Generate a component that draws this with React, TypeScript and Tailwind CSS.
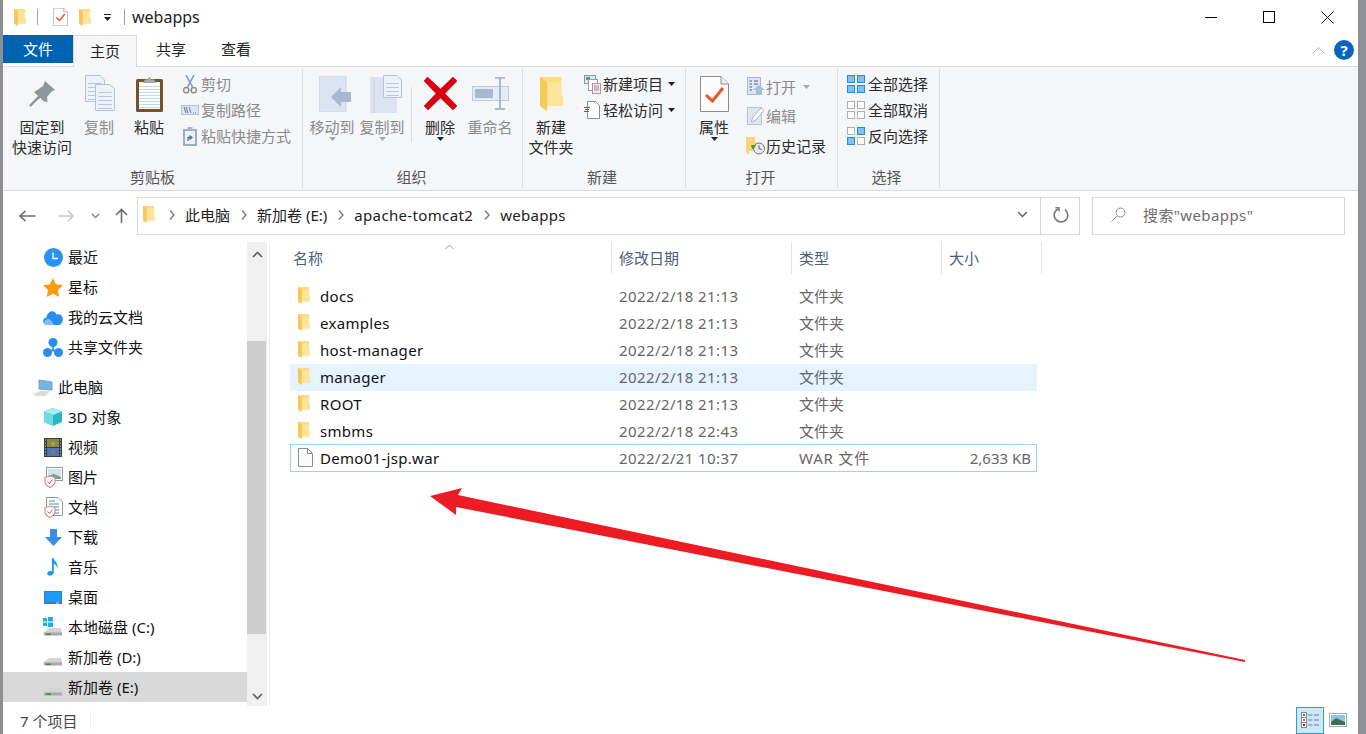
import React from "react";

const Folder = ({ w = 12, h = 17 }: { w?: number; h?: number }) => (
  <svg width={w} height={h} viewBox="0 0 68 100" preserveAspectRatio="none" className="block shrink-0">
    <path d="M0 0H63V55H68V85H21V100L0 85Z" fill="#fbdb84" />
    <path d="M21 15H63V55H68V85H21Z" fill="#fde49b" />
    <path d="M0 0L21 15V100L0 85Z" fill="#f5c85a" />
  </svg>
);

const CheckDoc = ({ w = 15, h = 18 }: { w?: number; h?: number }) => (
  <svg width={w} height={h} viewBox="0 0 29 36" className="block shrink-0">
    <path d="M.5.5H21L28.5 8V35.5H.5Z" fill="#fdfdfd" stroke="#8c8c8c" />
    <path d="M21 .5V8H28.5" fill="#eee" stroke="#8c8c8c" />
    <path d="M6 19L12.5 25L23 12" fill="none" stroke="#e8562a" strokeWidth="3" />
  </svg>
);

const Pin = () => (
  <svg width="27" height="26" viewBox="0 0 27 26" className="block">
    <path d="M0 25L9 15L11 17Z" fill="#8d979c" />
    <path d="M16 0L26 9L22.5 10.5L18 16L18.5 21L15 20.5L5 11L9 8.5L14 5Z" fill="#8d979c" />
    <path d="M1 25L11 15" stroke="#8d979c" strokeWidth="2.4" />
  </svg>
);

const DocSheet = ({ x, y, w, h }: { x: number; y: number; w: number; h: number }) => (
  <g>
    <path d={`M${x + .5} ${y + .5}H${x + w - 5}L${x + w - .5} ${y + 5}V${y + h - .5}H${x + .5}Z`} fill="#eef3fa" stroke="#b4c2dc" />
    {[8, 12, 16, 20, 24, 28].filter((l) => l < h - 2).map((l) => (
      <path key={l} d={`M${x + 3} ${y + l + .5}H${x + w - 3}`} stroke="#b9c7df" />
    ))}
  </g>
);

const CopyIcon = () => (
  <svg width="31" height="37" viewBox="0 0 31 37" className="block ml-[2px]">
    <DocSheet x={0} y={0} w={20} h={27} />
    <DocSheet x={10} y={9} w={20} h={27} />
  </svg>
);

const Clipboard = () => (
  <svg width="27" height="37" viewBox="0 0 27 37" className="block">
    <rect x="0" y="4" width="27" height="33" rx="1.5" fill="#7b4f2a" />
    <rect x="3" y="7" width="21" height="27" fill="#fff" />
    {[11, 14, 17, 20, 23, 26, 29, 32].map((y) => (
      <path key={y} d={`M3 ${y + .5}H24`} stroke="#bcdcf2" />
    ))}
    <path d="M7 8L9 4.5H12C12 1 15 1 15 4.5H18L20 8Z" fill="#a9a9a9" />
  </svg>
);

const Scissors = () => (
  <svg width="14" height="19" viewBox="0 0 14 19" fill="none" className="block">
    <path d="M3 0L9.5 12M11 0L4.5 12" stroke="#8fa0bb" strokeWidth="1.6" />
    <circle cx="3.2" cy="15.2" r="2.6" stroke="#8c8c8c" strokeWidth="1.5" />
    <circle cx="10.8" cy="15.2" r="2.6" stroke="#8c8c8c" strokeWidth="1.5" />
  </svg>
);

const PathIcon = () => (
  <svg width="18" height="10" viewBox="0 0 18 10" className="block">
    <rect x=".5" y=".5" width="17" height="9" fill="#dde5f2" stroke="#b4c2dc" />
    <path d="M3 2L5 8M5 2L7 8M8 2L10 8" stroke="#5b6b86" strokeWidth=".9" fill="none" />
    <path d="M12 8h1M14 8h1" stroke="#5b6b86" />
  </svg>
);

const ShortcutIcon = () => (
  <svg width="14" height="19" viewBox="0 0 14 19" className="block">
    <rect x="0" y="2" width="14" height="17" fill="#9aaccb" />
    <rect x="2" y="4" width="10" height="13" fill="#eef2f8" />
    <rect x="4.5" y="0" width="5" height="3.5" fill="#aab6ca" />
    <path d="M5 14V10.5H8M6.5 8.5L9 10.5L6.5 12.5" stroke="#56709c" strokeWidth="1.3" fill="none" />
  </svg>
);

const MoveTo = () => (
  <svg width="33" height="36" viewBox="0 0 33 36" className="block ml-[6px]">
    <rect x="0" y="0" width="27" height="36" fill="#dbe4f2" stroke="#c6d3e8" />
    <path d="M12 26L22 16V21H32V31H22V36Z" transform="translate(0,-5)" fill="#a8b8d2" />
  </svg>
);

const CopyTo = () => (
  <svg width="33" height="38" viewBox="0 0 33 38" className="block ml-[8px]">
    <path d="M0 2H27V38H0Z" fill="#dbe4f2" />
    <path d="M4 2V38" stroke="#c6d3e8" />
    <DocSheet x={13} y={0} w={19} h={23} />
  </svg>
);

const Delete = () => (
  <svg width="33" height="33" viewBox="0 0 33 33" className="block">
    <path d="M3.5 0L16.5 12L29 0L33 4L21 16.5L33 29L29 33L16.5 21L4 33L0 29L12 16.5L0 4Z" fill="#d90012" stroke="#b3000c" strokeWidth=".5" />
  </svg>
);

const Rename = () => (
  <svg width="37" height="33" viewBox="0 0 37 33" className="block">
    <rect x=".5" y="9.5" width="36" height="14" fill="#e6ecf6" stroke="#bccbe2" />
    <rect x="3" y="12" width="18" height="9" fill="#a8b8d2" />
    <path d="M23 .8H33M28 1V32M23 32H33" stroke="#a8b8d2" strokeWidth="2" fill="none" />
  </svg>
);

const NewItem = () => (
  <svg width="17" height="19" viewBox="0 0 17 19" className="block">
    <rect x=".5" y=".5" width="11" height="8" fill="#dce7f2" stroke="#7e9bb5" />
    <rect x="2" y="2" width="4" height="3" fill="#5c9a6e" />
    <rect x="4.5" y="4.5" width="9" height="11" fill="#fff" stroke="#9a9a9a" />
    <rect x="8.5" y="8.5" width="8" height="10" fill="#f8e9ea" stroke="#c98a90" />
    <path d="M10 11h5M10 13h5M10 15h5" stroke="#7996c2" />
  </svg>
);

const EasyAccess = () => (
  <svg width="16" height="18" viewBox="0 0 16 18" className="block">
    <path d="M3.5.5H11.5L15.5 4.5V17.5H3.5Z" fill="#fff" stroke="#8e8e8e" />
    <path d="M0 6.5H6M1 8.5H5M0 10.5H5" stroke="#1c71c7" />
  </svg>
);

const OpenIcon = () => (
  <svg width="18" height="19" viewBox="0 0 18 19" className="block">
    <rect x=".5" y=".5" width="13" height="17" fill="#dfe6f2" stroke="#a8b6cc" />
    <path d="M2.5 4H5M2.5 7H5M2.5 10H5M2.5 13H5M7 4H11M7 7H11" stroke="#7f8fa8" strokeWidth="1.4" />
    <path d="M6 13L12 8L18 13H15V18H9V13Z" fill="#a8bdd8" />
  </svg>
);

const EditIcon = () => (
  <svg width="17" height="18" viewBox="0 0 17 18" className="block">
    <rect x=".5" y=".5" width="14" height="17" fill="#dfe6f2" stroke="#b4c2dc" />
    <path d="M4 15L6 10L14 1L17 3.5L9 13Z" fill="#fff" stroke="#a8b8d2" />
  </svg>
);

const HistoryIcon = () => (
  <svg width="19" height="18" viewBox="0 0 19 18" className="block">
    <path d="M0 0H9V5H10V14H3V18L0 15Z" fill="#f7d677" />
    <circle cx="13" cy="11.5" r="5.5" fill="#e8e8e8" stroke="#777" />
    <path d="M13 8.5V11.5L15.5 12.5" stroke="#555" fill="none" />
    <path d="M5 8H10L8 12H6Z" fill="#3aa33a" />
  </svg>
);

const Grid = ({ cells }: { cells: boolean[] }) => (
  <svg width="18" height="18" viewBox="0 0 18 18" className="block">
    {[
      [0, 0],
      [10, 0],
      [0, 10],
      [10, 10],
    ].map(([x, y], i) => (
      <rect key={i} x={x + .5} y={y + .5} width="7" height="7" fill={cells[i] ? "#7fc2f2" : "#fff"} stroke={cells[i] ? "#2a8ad4" : "#b0b0b0"} />
    ))}
  </svg>
);

const Caret = ({ dark = true }: { dark?: boolean }) => (
  <svg width="7" height="4" viewBox="0 0 7 4" className="block">
    <path d="M0 0H7L3.5 4Z" fill={dark ? "#222" : "#a8a8a8"} />
  </svg>
);

const Big = ({ w, icon, lines, dim, caret }: { w: number; icon: React.ReactNode; lines: string[]; dim?: boolean; caret?: "dark" | "light" }) => (
  <div className={`flex flex-col items-center shrink-0 ${dim ? "text-[#8a8a8a]" : "text-[#2b2b2b]"}`} style={{ width: w }}>
    <div className="h-[47px] flex items-center justify-center">{icon}</div>
    {lines.map((l) => (
      <div key={l} className="h-[20px] leading-[20px] whitespace-nowrap">{l}</div>
    ))}
    {caret ? <div><Caret dark={caret === "dark"} /></div> : null}
  </div>
);

const Small = ({ icon, text, dim, caret, h = 26, iw = 22, greyCaret }: { icon: React.ReactNode; text: string; dim?: boolean; caret?: boolean; h?: number; iw?: number; greyCaret?: boolean }) => (
  <div className={`flex items-center whitespace-nowrap ${dim ? "text-[#8a8a8a]" : "text-[#2b2b2b]"}`} style={{ height: h }}>
    <div className="flex justify-center shrink-0" style={{ width: iw }}>{icon}</div>
    <span className="leading-[20px]">{text}</span>
    {caret ? <span className="ml-[5px]"><Caret /></span> : null}
    {greyCaret ? <span className="ml-[7px]"><Caret dark={false} /></span> : null}
  </div>
);

const Group = ({ w, label, shift = 0, children }: { w: number; label: string; shift?: number; children: React.ReactNode }) => (
  <div className="flex flex-col shrink-0 border-r border-[#dcdddf] h-[119px]" style={{ width: w }}>
    <div className="flex h-[98px] items-start pt-[1px]">{children}</div>
    <div className="text-center text-[#555] h-[19px] leading-[19px] flex-1 pt-[1px]" style={{ paddingRight: shift }}>{label}</div>
  </div>
);

const Chev = ({ d, c = "#666", w = 10, h = 6, sw = 1.5 }: { d: string; c?: string; w?: number; h?: number; sw?: number }) => (
  <svg width={w} height={h} viewBox={`0 0 ${w} ${h}`} fill="none" className="block shrink-0">
    <path d={d} stroke={c} strokeWidth={sw} />
  </svg>
);

const Crumb = () => (
  <svg width="6" height="10" viewBox="0 0 6 10" fill="none" className="block shrink-0">
    <path d="M1 .5L5 5L1 9.5" stroke="#777" strokeWidth="1.3" />
  </svg>
);

const Shield = () => (
  <g>
    <path d="M1 10.5L6 9L11 10.5V15C11 18 8 19.5 6 20.5C4 19.5 1 18 1 15Z" fill="#fff" stroke="#ef7f7f" strokeWidth="1.1" />
    <path d="M3.5 14.5L5.5 16.5L8.5 12.5" stroke="#777" fill="none" />
  </g>
);

const Drive = ({ win }: { win?: boolean }) => (
  <svg width="20" height="20" viewBox="0 0 20 20" className="block">
    {win ? (
      <g fill="#12b5ea">
        <rect x="0" y="1" width="4" height="3.5" />
        <rect x="5" y="0" width="5" height="4.5" />
        <rect x="0" y="5.5" width="4" height="3.5" />
        <rect x="5" y="5.5" width="5" height="4.5" />
      </g>
    ) : null}
    <path d="M0 16L6 11H18L19 15V18H1Z" fill="#d4d4d4" />
    <path d="M1 15.5H19V18.5H1Z" fill="#a9a9a9" />
    <path d="M3 16.5H8V18H3Z" fill="#3a8a3a" />
  </svg>
);

const navIcons: Record<string, React.ReactNode> = {
  clock: (
    <svg width="19" height="19" viewBox="0 0 19 19" className="block">
      <circle cx="9.5" cy="9.5" r="9.5" fill="#2a93f2" />
      <path d="M9 4.5V10.5H14" stroke="#fff" strokeWidth="1.3" fill="none" />
    </svg>
  ),
  star: (
    <svg width="20" height="19" viewBox="0 0 20 19" className="block">
      <path d="M10 0L13 6.2L20 7.2L15 12L16.2 19L10 15.7L3.8 19L5 12L0 7.2L7 6.2Z" fill="#fb9b14" />
    </svg>
  ),
  cloud: (
    <svg width="20" height="15" viewBox="0 0 20 15" className="block">
      <path d="M4 15C-1 15 -1 8 3.5 7.5C4 1 11.5 -1 13.5 4.5C18 3 21 7 19.5 11C18.5 14 17 15 15 15Z" fill="#2a8ef0" />
      <path d="M1 13.5C1.5 8.5 7 6 11 15H4C2.5 15 1.5 14.5 1 13.5Z" fill="#7cc0f7" />
    </svg>
  ),
  share: (
    <svg width="20" height="19" viewBox="0 0 20 19" className="block">
      <circle cx="10" cy="4.5" r="4.5" fill="#2a8ef0" />
      <circle cx="4.5" cy="14.5" r="4.5" fill="#2a8ef0" />
      <circle cx="15.5" cy="14.5" r="4.5" fill="#2a8ef0" />
      <path d="M10 8V12M10 12L7 14M10 12L13 14" stroke="#2a8ef0" strokeWidth="1.6" />
    </svg>
  ),
  pc: (
    <svg width="20" height="17" viewBox="0 0 20 17" className="block">
      <path d="M6 1L19 3V11L6 10Z" fill="#6cb8e6" stroke="#8a9aa6" />
      <path d="M0 15L7 12H17L13 17H3Z" fill="#dcdcdc" />
    </svg>
  ),
  cube: (
    <svg width="18" height="18" viewBox="0 0 18 18" className="block">
      <path d="M9 0L18 3.5V14L9 18L0 14V3.5Z" fill="#2cb5c9" />
      <path d="M9 0L18 3.5L9 7L0 3.5Z" fill="#a6eef0" />
      <path d="M0 3.5L9 7V18L0 14Z" fill="#6fdbe3" />
    </svg>
  ),
  film: (
    <svg width="18" height="19" viewBox="0 0 18 19" className="block">
      <rect x="0" y="0" width="18" height="19" fill="#3c3c3c" />
      <rect x="3" y="1" width="12" height="8" fill="#7f8f4a" />
      <rect x="3" y="10" width="12" height="8" fill="#4478c8" />
      <path d="M1 2h1M1 5h1M1 8h1M1 11h1M1 14h1M1 17h1M16 2h1M16 5h1M16 8h1M16 11h1M16 14h1M16 17h1" stroke="#ddd" />
      <circle cx="9" cy="6" r="2" fill="#d9952f" />
      <circle cx="9" cy="14" r="2" fill="#c9622f" />
    </svg>
  ),
  pic: (
    <svg width="19" height="21" viewBox="0 0 19 21" className="block">
      <rect x="2.5" y=".5" width="16" height="13" fill="#fff" stroke="#9a9a9a" />
      <rect x="4" y="2" width="13" height="10" fill="#cfe4f2" />
      <path d="M4 9L10 7L17 10V12H4Z" fill="#7c9c8a" />
      <Shield />
    </svg>
  ),
  doc: (
    <svg width="19" height="21" viewBox="0 0 19 21" className="block">
      <path d="M2.5.5H14L18.5 5V18.5H2.5Z" fill="#fff" stroke="#9a9a9a" />
      <path d="M5 4H11M5 7H15M5 10H15M10 13H15M10 16H15" stroke="#3f8ed6" />
      <Shield />
    </svg>
  ),
  down: (
    <svg width="17" height="17" viewBox="0 0 17 17" className="block">
      <path d="M5 0H12V8H17L8.5 17L0 8H5Z" fill="#3b8ee6" />
    </svg>
  ),
  music: (
    <svg width="12" height="18" viewBox="0 0 12 18" className="block">
      <path d="M5 0H6.5C7 3 11.5 5 10.5 10C10 7.5 8.5 6.5 6.8 6V14.5C6.8 17 3.5 18 1.5 17.5C-.5 16.5 0 13.5 2.5 13C3.5 12.8 4.5 13 5 13.2Z" fill="#1d9bf0" />
    </svg>
  ),
  desk: (
    <svg width="18" height="13" viewBox="0 0 18 13" className="block">
      <rect x="0" y="0" width="18" height="13" fill="#2c7fd0" />
      <rect x="1" y="1" width="16" height="10" fill="#1e9cf5" />
      <rect x="12" y="11.5" width="3" height="1" fill="#cfe6fa" />
    </svg>
  ),
};

const NavRow = ({ icon, text, top, sel }: { icon: React.ReactNode; text: string; top?: boolean; sel?: boolean }) => (
  <div className={`flex items-center h-[30px] ${top ? "mt-[10px] pl-[30px]" : "pl-[40px]"} ${sel ? "bg-[#d9d9d9]" : ""} text-[#111] whitespace-nowrap`}>
    <div className="w-[20px] flex justify-center shrink-0">{icon}</div>
    <span className="ml-[5px] leading-[20px]">{text}</span>
  </div>
);

const FileRow = ({ name, date, type, size, sel, focus, file }: { name: string; date: string; type: string; size?: string; sel?: boolean; focus?: boolean; file?: boolean }) => (
  <div className={`flex items-center ${focus ? "h-[28px] -mt-px border border-[#99d1ff]" : "h-[27px] border border-transparent"} ${sel ? "bg-[#e5f3ff]" : ""} w-[747px]`}>
    <div className="w-[29px] shrink-0 flex justify-start pl-[7px] -mt-[2px]">
      {file ? (
        <svg width="15" height="19" viewBox="0 0 15 19" className="block">
          <path d="M.5.5H9.5L14.5 5.5V18.5H.5Z" fill="#fbfbfb" stroke="#8e8e8e" />
          <path d="M9.5.5V5.5H14.5" fill="none" stroke="#8e8e8e" />
        </svg>
      ) : (
        <Folder w={12} h={17} />
      )}
    </div>
    <div className={`w-[299px] shrink-0 text-[#111] whitespace-nowrap tracking-[0.3px] ${file ? "" : "pb-[2px]"}`}>{name}</div>
    <div className={`w-[180px] shrink-0 text-[#666] tracking-[0.4px] ${file ? "" : "pb-[2px]"}`}>{date}</div>
    <div className={`w-[100px] shrink-0 text-[#666] ${file ? "tracking-[0.8px]" : "pb-[2px]"}`}>{type}</div>
    <div className="flex-1 text-right text-[#666] pr-[5px]">{size}</div>
  </div>
);

const HeadCell = ({ w, text }: { w: number; text: string }) => (
  <div className="h-[32px] shrink-0 flex items-center border-r border-[#e5e5e5] pl-[7px] text-[#4c607a]" style={{ width: w }}>
    <span className="leading-[20px]">{text}</span>
  </div>
);

const rows = [
  ["docs", "2022/2/18 21:13"],
  ["examples", "2022/2/18 21:13"],
  ["host-manager", "2022/2/18 21:13"],
  ["manager", "2022/2/18 21:13"],
  ["ROOT", "2022/2/18 21:13"],
  ["smbms", "2022/2/18 22:43"],
];

export default function App() {
  return (
    <div className="relative w-[1366px] h-[734px] overflow-hidden flex bg-white text-[15px] leading-[20px] font-['Noto_Sans','Noto_Sans_CJK_SC',sans-serif]">
      <div className="w-[3px] shrink-0 bg-[#8e8e92]" />
      <div className="w-[1355px] shrink-0 flex flex-col">
        {/* title bar */}
        <div className="h-[35px] shrink-0 flex items-center pb-[1px]">
          <div className="ml-[11px]"><Folder w={12} h={17} /></div>
          <div className="ml-[11px] w-px h-[16px] bg-[#a0a0a0]" />
          <div className="ml-[15px]"><CheckDoc /></div>
          <div className="ml-[11px]"><Folder w={12} h={17} /></div>
          <div className="ml-[13px]">
            <div className="w-[7px] h-px bg-[#222] mb-[2px]" />
            <Caret />
          </div>
          <div className="ml-[13px] w-px h-[16px] bg-[#a0a0a0]" />
          <div className="ml-[7px] text-[16px] text-[#222] leading-[20px]">webapps</div>
          <div className="flex-1" />
          <div className="w-[58px] flex justify-center"><div className="w-[12px] h-px bg-black" /></div>
          <div className="w-[58px] flex justify-center"><div className="w-[12px] h-[12px] border border-black" /></div>
          <div className="w-[58px] flex justify-center mr-[2px]">
            <svg width="13" height="13" viewBox="0 0 13 13" className="block"><path d="M.5.5L12.5 12.5M12.5.5L.5 12.5" stroke="#111" /></svg>
          </div>
        </div>
        {/* tabs */}
        <div className="h-[32px] shrink-0 flex border-b border-[#dadbdc]">
          <div className="w-[70px] h-[28px] bg-[#0063b1] text-white flex items-center justify-center">文件</div>
          <div className="w-[64px] h-[32px] bg-[#f5f6f7] border border-b-0 border-[#dadbdc] text-[#222] flex items-center justify-center pb-[1px]">主页</div>
          <div className="w-[66px] h-[28px] flex items-center justify-center text-[#222] pl-[2px]">共享</div>
          <div className="w-[64px] h-[28px] flex items-center justify-center text-[#222] pl-[2px]">查看</div>
          <div className="flex-1" />
          <div className="h-[28px] flex items-center mr-[4px] mt-[1px] gap-[9px]">
            <Chev d="M.5 6.5L6.5.5L12.5 6.5" c="#b5b5b5" w={13} h={7} sw={1} />
            <div className="w-[20px] h-[20px] rounded-full bg-[#0a64bd] text-white text-[15px] font-bold flex items-center justify-center">?</div>
          </div>
        </div>
        {/* ribbon */}
        <div className="h-[124px] shrink-0 bg-[#f5f6f7] border-b border-[#dadbdc] flex pt-[2px]">
          <Group w={300} label="剪贴板">
            <div className="w-[7px]" />
            <Big w={64} icon={<Pin />} lines={["固定到", "快速访问"]} />
            <Big w={50} dim icon={<CopyIcon />} lines={["复制"]} />
            <Big w={50} icon={<Clipboard />} lines={["粘贴"]} />
            <div className="flex flex-col ml-[5px] pt-[1px]">
              <Small dim icon={<Scissors />} text="剪切" />
              <Small dim icon={<PathIcon />} text="复制路径" />
              <Small dim icon={<ShortcutIcon />} text="粘贴快捷方式" />
            </div>
          </Group>
          <Group w={220} label="组织" shift={2}>
            <div className="w-[4px]" />
            <Big w={50} dim icon={<MoveTo />} lines={["移动到"]} caret="light" />
            <Big w={50} dim icon={<CopyTo />} lines={["复制到"]} caret="light" />
            <div className="w-px h-[55px] bg-[#dcdddf] mt-[17px] ml-[4px] mr-[3px]" />
            <Big w={50} icon={<Delete />} lines={["删除"]} caret="dark" />
            <Big w={50} dim icon={<Rename />} lines={["重命名"]} />
          </Group>
          <Group w={163} label="新建" shift={4}>
            <div className="w-[4px]" />
            <Big w={48} icon={<Folder w={23} h={34} />} lines={["新建", "文件夹"]} />
            <div className="flex flex-col ml-[6px] pt-[1px]">
              <Small icon={<NewItem />} text="新建项目" caret />
              <Small icon={<EasyAccess />} text="轻松访问" caret />
            </div>
          </Group>
          <Group w={152} label="打开" shift={2}>
            <div className="w-[6px]" />
            <Big w={44} icon={<CheckDoc w={29} h={36} />} lines={["属性"]} caret="dark" />
            <div className="flex flex-col ml-[9px] pt-[2px]">
              <Small dim icon={<OpenIcon />} text="打开" greyCaret h={29} iw={21} />
              <Small dim icon={<EditIcon />} text="编辑" h={30} iw={21} />
              <Small icon={<HistoryIcon />} text="历史记录" h={30} iw={21} />
            </div>
          </Group>
          <Group w={102} label="选择" shift={4}>
            <div className="flex flex-col ml-[5px] pt-[1px]">
              <Small icon={<Grid cells={[true, true, true, true]} />} text="全部选择" iw={25} />
              <Small icon={<Grid cells={[false, false, false, false]} />} text="全部取消" iw={25} />
              <Small icon={<Grid cells={[false, true, true, false]} />} text="反向选择" iw={25} />
            </div>
          </Group>
        </div>
        {/* address row */}
        <div className="h-[45px] shrink-0 flex items-center pt-[5px] pb-[1px]">
          <svg width="17" height="12" viewBox="0 0 17 12" fill="none" className="block ml-[16px]"><path d="M16.5 6H1.5M6.5.8L1 6L6.5 11.2" stroke="#6d6d6d" strokeWidth="1.6" /></svg>
          <svg width="16" height="12" viewBox="0 0 16 12" fill="none" className="block ml-[22px]"><path d="M0 6H15M10 .8L15 6L10 11.2" stroke="#c9c9c9" strokeWidth="1.6" /></svg>
          <div className="ml-[17px]"><Chev d="M1 1L4.5 4.5L8 1" w={9} h={6} c="#888" /></div>
          <svg width="13" height="15" viewBox="0 0 13 15" fill="none" className="block ml-[15px]"><path d="M6.5 15V1.5M1 7L6.5 1.5L12 7" stroke="#6d6d6d" strokeWidth="1.6" /></svg>
          <div className="ml-[9px] w-[943px] h-[38px] border border-[#d9d9d9] flex items-center text-[#222] pb-[2px]">
            <div className="ml-[5px]"><Folder w={12} h={17} /></div>
            <div className="ml-[14px]"><Crumb /></div>
            <span className="ml-[10px]">此电脑</span>
            <div className="ml-[11px]"><Crumb /></div>
            <span className="ml-[10px] whitespace-nowrap">新加卷 (E:)</span>
            <div className="ml-[11px]"><Crumb /></div>
            <span className="ml-[10px] whitespace-nowrap tracking-[0.35px]">apache-tomcat2</span>
            <div className="ml-[11px]"><Crumb /></div>
            <span className="ml-[10px] tracking-[0.3px]">webapps</span>
            <div className="flex-1" />
            <Chev d="M1 1L5.5 5.5L10 1" w={11} h={7} c="#666" />
            <div className="ml-[12px] w-px self-stretch -mb-[2px] bg-[#d9d9d9]" />
            <svg width="16" height="16" viewBox="0 0 16 16" fill="none" className="block ml-[12px] mr-[10px]"><path d="M5.5 1.8A6.8 6.8 0 1 0 12 2.6" stroke="#7a7a7a" strokeWidth="1.7" /><path d="M2.5 .8H6V4.5" stroke="#7a7a7a" strokeWidth="1.5" /></svg>
          </div>
          <div className="ml-[12px] w-[253px] h-[38px] border border-[#d9d9d9] flex items-center text-[#6d6d6d] pb-[2px]">
            <svg width="15" height="15" viewBox="0 0 15 15" fill="none" className="block ml-[18px]"><circle cx="9.5" cy="5.5" r="4.5" stroke="#8a8a8a" /><path d="M6 9L.5 14.5" stroke="#8a8a8a" /></svg>
            <span className="ml-[17px] whitespace-nowrap tracking-[0.4px]">搜索"webapps"</span>
          </div>
        </div>
        {/* body */}
        <div className="flex-1 flex min-h-0 pt-[6px]">
          <div className="w-[244px] shrink-0 flex flex-col">
            <NavRow icon={navIcons.clock} text="最近" />
            <NavRow icon={navIcons.star} text="星标" />
            <NavRow icon={navIcons.cloud} text="我的云文档" />
            <NavRow icon={navIcons.share} text="共享文件夹" />
            <NavRow top icon={navIcons.pc} text="此电脑" />
            <NavRow icon={navIcons.cube} text="3D 对象" />
            <NavRow icon={navIcons.film} text="视频" />
            <NavRow icon={navIcons.pic} text="图片" />
            <NavRow icon={navIcons.doc} text="文档" />
            <NavRow icon={navIcons.down} text="下载" />
            <NavRow icon={navIcons.music} text="音乐" />
            <NavRow icon={navIcons.desk} text="桌面" />
            <NavRow icon={<Drive win />} text="本地磁盘 (C:)" />
            <NavRow icon={<Drive />} text="新加卷 (D:)" />
            <NavRow sel icon={<Drive />} text="新加卷 (E:)" />
          </div>
          <div className="w-[20px] shrink-0 h-[464px] bg-[#f0f0f0] flex flex-col">
            <div className="h-[99px] flex justify-center pt-[9px]"><Chev d="M1 6L5.5 1.5L10 6" w={11} h={7} c="#606060" sw={1.7} /></div>
            <div className="h-[293px] bg-[#cdcdcd] mr-[1px]" />
            <div className="flex-1 flex justify-center items-end pb-[6px]"><Chev d="M1 1L5.5 5.5L10 1" w={11} h={7} c="#606060" sw={1.7} /></div>
          </div>
          <div className="w-[3px] shrink-0 border-r border-[#efefef] h-[464px]" />
          <div className="flex-1 flex flex-col min-w-0">
            <div className="flex h-[32px] shrink-0 pl-[16px]">
              <div className="relative">
                <HeadCell w={326} text="名称" />
                <div className="absolute left-[159px] top-[2px]"><Chev d="M.5 5L4.5 1L8.5 5" w={9} h={6} c="#9a9a9a" sw={1} /></div>
              </div>
              <HeadCell w={180} text="修改日期" />
              <HeadCell w={150} text="类型" />
              <HeadCell w={100} text="大小" />
            </div>
            <div className="flex flex-col pl-[20px] pt-[9px]">
              {rows.map(([n, d]) => (
                <FileRow key={n} name={n} date={d} type="文件夹" sel={n === "manager"} />
              ))}
              <FileRow file focus name="Demo01-jsp.war" date="2022/2/21 10:37" type="WAR 文件" size="2,633 KB" />
            </div>
          </div>
        </div>
        {/* status bar */}
        <div className="h-[28px] shrink-0 flex items-center text-[#444]">
          <div className="ml-[17px] w-[70px] whitespace-nowrap pt-[2px]">7 个项目</div>
          <div className="w-px h-[18px] bg-[#f0f0f0]" />
          <div className="flex-1" />
          <div className="w-[28px] h-[27px] mt-[1px] bg-[#cce8ff] border border-[#26a0da] flex items-center justify-center">
            <svg width="18" height="17" viewBox="0 0 18 17" className="block">
              <rect x=".5" y=".5" width="5" height="5" fill="#fff" stroke="#8a8a8a" />
              <rect x=".5" y="5.5" width="5" height="5" fill="#fff" stroke="#8a8a8a" />
              <rect x=".5" y="10.5" width="5" height="5" fill="#fff" stroke="#8a8a8a" />
              <rect x="2" y="2" width="2" height="2" fill="#3a80b0" />
              <rect x="2" y="7" width="2" height="2" fill="#a07030" />
              <rect x="2" y="12" width="2" height="2" fill="#c02020" />
              <path d="M7 3H11.5M13 3H18M7 8H11.5M13 8H18M7 13H11.5M13 13H18" stroke="#777" />
            </svg>
          </div>
          <div className="ml-[5px] mr-[11px]">
            <svg width="18" height="14" viewBox="0 0 18 14" className="block">
              <rect x=".5" y=".5" width="17" height="13" fill="#fff" stroke="#a8a8a8" />
              <rect x="2" y="2" width="14" height="10" fill="#8cc4ee" />
              <path d="M2 9L7 5L16 9V12H2Z" fill="#3f6e58" />
            </svg>
          </div>
        </div>
      </div>
      <div className="w-[8px] shrink-0 bg-[#8d9196]" />
      <svg width="1366" height="734" viewBox="0 0 1366 734" className="absolute left-0 top-0 pointer-events-none">
        <path d="M430 496L462 488L458 495L1245 660V662L456 507L456 515Z" fill="#ed1c24" />
      </svg>
    </div>
  );
}
